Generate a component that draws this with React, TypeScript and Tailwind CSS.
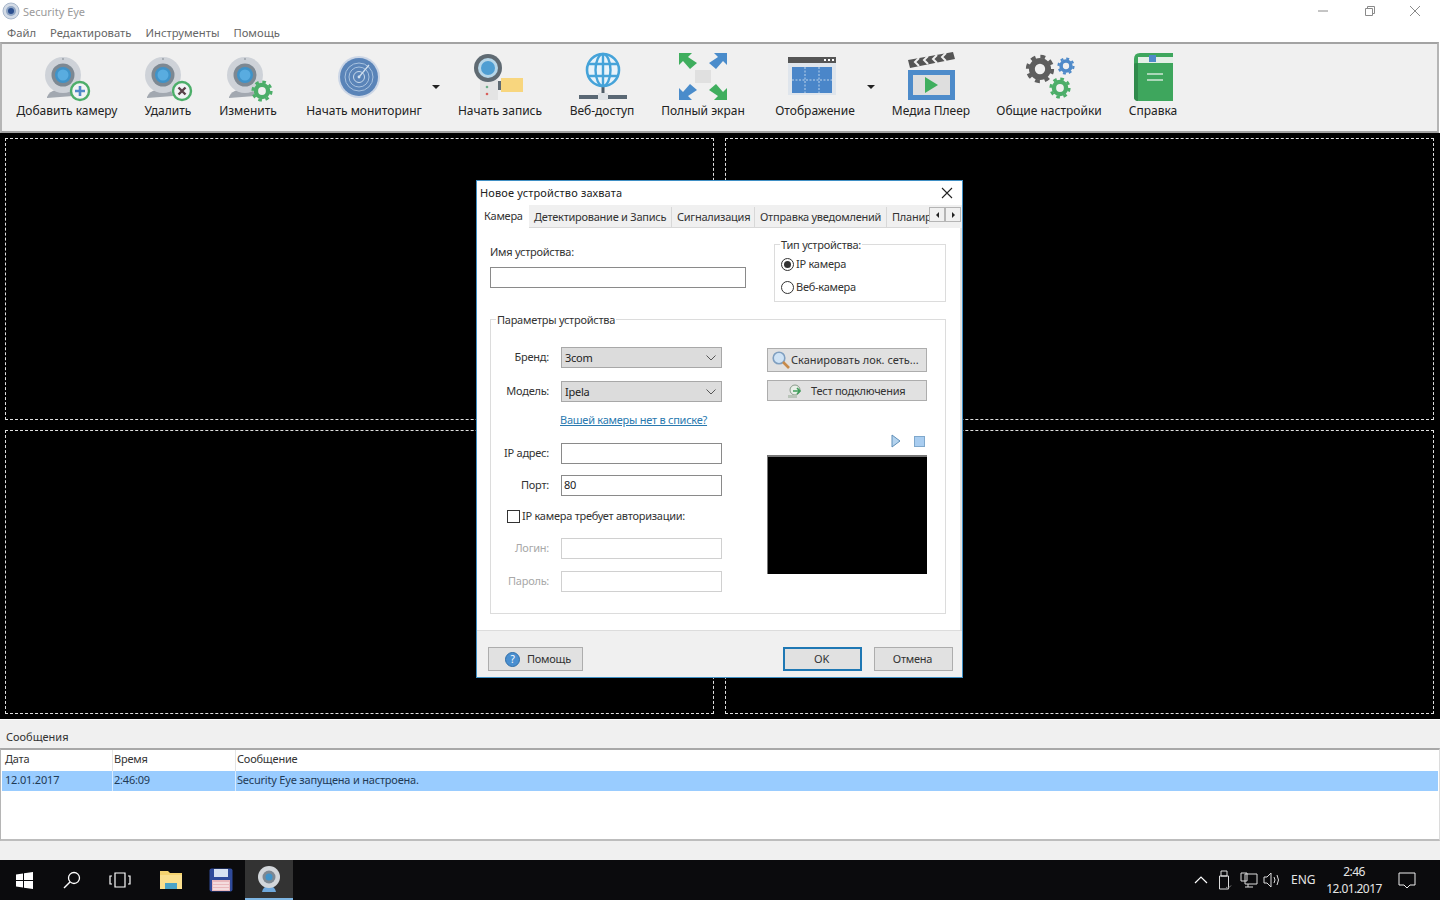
import React from "react";

function Gear({ x, y, r, color, teeth = 8 }: { x: number; y: number; r: number; color: string; teeth?: number }) {
  const tr = r * 0.88;
  const seg = (2 * Math.PI * tr) / (teeth * 2);
  return (
    <g>
      <circle cx={x} cy={y} r={tr} fill="none" stroke={color} strokeWidth={r * 0.26} strokeDasharray={`${seg} ${seg}`} />
      <circle cx={x} cy={y} r={r * 0.58} fill="none" stroke={color} strokeWidth={r * 0.42} />
    </g>
  );
}

function Camera({ cx, badge }: { cx: number; badge: React.ReactNode }) {
  return (
    <svg width="56" height="52" viewBox="0 0 56 52">
      <path d={`M${cx - 16} 47 Q${cx - 14} 41 ${cx - 6} 40 L${cx + 8} 40 L${cx + 10} 46 L${cx - 16} 48Z`} fill="#a2a8b0" />
      <circle cx={cx} cy="25" r="18" fill="#ced2d8" />
      <circle cx={cx} cy="9" r="1" fill="#9aa0a8" />
      <circle cx={cx} cy="25" r="11.5" fill="#7d8892" />
      <circle cx={cx} cy="25" r="8" fill="#3f93c9" />
      <circle cx={cx} cy="25" r="5.5" fill="#59ace0" />
      {badge}
    </svg>
  );
}

function PlusBadge() {
  return (
    <g>
      <circle cx="41" cy="41" r="9" fill="#f1f3f4" stroke="#4cae69" strokeWidth="2.4" />
      <path d="M41 36v10M36 41h10" stroke="#4f8ac9" strokeWidth="2.6" />
    </g>
  );
}

function CrossBadge() {
  return (
    <g>
      <circle cx="42" cy="41" r="9" fill="#f1f3f4" stroke="#4cae69" strokeWidth="2.4" />
      <path d="M38.5 37.5l7 7M45.5 37.5l-7 7" stroke="#5a4148" strokeWidth="2.4" />
    </g>
  );
}

function RadarIcon() {
  return (
    <svg width="56" height="52" viewBox="0 0 56 52">
      <circle cx="23" cy="27" r="21" fill="#ccd6e6" />
      <circle cx="23" cy="27" r="19" fill="#5a84b8" />
      <circle cx="23" cy="27" r="14" fill="none" stroke="#a9c3e0" strokeWidth="1" />
      <circle cx="23" cy="27" r="10" fill="none" stroke="#a9c3e0" strokeWidth="1" />
      <circle cx="23" cy="27" r="5.5" fill="none" stroke="#c7d9ec" strokeWidth="1" />
      <path d="M23 27L33 15" stroke="#d3e1f0" strokeWidth="1.2" />
      <circle cx="23" cy="27" r="1.4" fill="#d3e1f0" />
    </svg>
  );
}

function RecordIcon() {
  return (
    <svg width="56" height="52" viewBox="0 0 56 52">
      <rect x="8" y="30" width="18" height="20" fill="#e4e4e4" />
      <circle cx="15" cy="37" r="1.3" fill="#6db08a" />
      <circle cx="15" cy="44" r="1.3" fill="#d9605c" />
      <rect x="26" y="31" width="3" height="9" fill="#5f6a72" />
      <rect x="29" y="28" width="22" height="14" fill="#f8d67e" />
      <circle cx="16" cy="18" r="14" fill="#5f6a72" />
      <circle cx="16" cy="18" r="10" fill="#b6d6e8" />
      <circle cx="16" cy="18" r="7" fill="#4f9ed2" />
    </svg>
  );
}

function GlobeIcon() {
  return (
    <svg width="56" height="52" viewBox="0 0 56 52">
      <rect x="27.5" y="36" width="3" height="11" fill="#4f5d68" />
      <rect x="5" y="45" width="21" height="4" fill="#5a6874" />
      <rect x="33" y="45" width="20" height="4" fill="#5a6874" />
      <rect x="24" y="43" width="10" height="7" fill="#dfe3e6" />
      <circle cx="29" cy="20" r="16" fill="#e8f3fa" stroke="#45a3d9" strokeWidth="2.6" />
      <ellipse cx="29" cy="20" rx="7.5" ry="16" fill="none" stroke="#45a3d9" strokeWidth="2.4" />
      <path d="M29 4v32M14.5 14h29M14.5 26h29" stroke="#45a3d9" strokeWidth="2.4" />
    </svg>
  );
}

function FullscreenIcon() {
  const arrow = "4,3 17,3 13,7 22,13 15,19 8,11 4,15";
  return (
    <svg width="56" height="52" viewBox="0 0 56 52">
      <rect x="20" y="20" width="16" height="13" fill="#e0e0e0" />
      <polygon points={arrow} fill="#3fae5e" />
      <polygon points={arrow} fill="#4a8ccb" transform="translate(56 0) scale(-1 1)" />
      <polygon points={arrow} fill="#4a8ccb" transform="translate(0 53) scale(1 -1)" />
      <polygon points={arrow} fill="#3fae5e" transform="translate(56 53) scale(-1 -1)" />
    </svg>
  );
}

function DisplayIcon() {
  return (
    <svg width="56" height="52" viewBox="0 0 56 52">
      <rect x="1" y="7" width="48" height="38" fill="#dfe5ec" />
      <rect x="1" y="7" width="48" height="6" fill="#555" />
      <path d="M37 10h2M41 10h2M45 10h2" stroke="#fff" strokeWidth="2" />
      <rect x="5" y="17" width="40" height="26" fill="#4a86c9" />
      <path d="M18 17v26M32 17v26M5 30h40" stroke="#dce8f5" strokeWidth="0.8" strokeDasharray="2 1.5" />
    </svg>
  );
}

function MediaIcon() {
  return (
    <svg width="56" height="52" viewBox="0 0 56 52">
      <polygon points="5,10 50,2 52,9 7,18" fill="#555" />
      <path d="M16 8l-4 4 4 4M25 6l-4 4 4 4M34 5l-4 4 4 4M43 3l-4 4 4 4" fill="none" stroke="#f0f0f0" strokeWidth="2" />
      <rect x="5" y="20" width="47" height="30" fill="#4d8bca" />
      <rect x="10" y="25" width="37" height="20" fill="#dedede" />
      <polygon points="22,27 22,43 35,35" fill="#3fae5e" />
    </svg>
  );
}

function SettingsIcon() {
  return (
    <svg width="56" height="52" viewBox="0 0 56 52">
      <Gear x={19} y={19} r={14} color="#5e5e5e" />
      <Gear x={45} y={16} r={8.5} color="#4f8ac9" />
      <Gear x={39} y={38} r={10.5} color="#4cae69" />
    </svg>
  );
}

function BookIcon() {
  return (
    <svg width="56" height="52" viewBox="0 0 56 52">
      <path d="M9 9 Q9 3 15 3 L48 3 L48 51 L14 51 Q9 51 9 47Z" fill="#3ea65d" />
      <rect x="13" y="7" width="35" height="6" fill="#e3efe6" />
      <rect x="24" y="5" width="7" height="7" fill="#4f8ac9" />
      <path d="M9 14 Q9 13 13 13 L13 51 Q9 51 9 47Z" fill="#2f8a4b" />
      <path d="M22 24h16M22 30h16" stroke="#cfe8d6" strokeWidth="1.6" />
    </svg>
  );
}

function DropArrow({ className }: { className: string }) {
  return <div className={`absolute w-0 h-0 border-l-[4px] border-r-[4px] border-t-[4px] border-l-transparent border-r-transparent border-t-[#222] ${className}`} />;
}

function ToolItem({ width, label, children, arrow }: { width: string; label: string; children: React.ReactNode; arrow?: string }) {
  return (
    <div className={`relative flex flex-col items-center shrink-0 ${width}`}>
      <div className="h-[52px]">{children}</div>
      <div className="h-[18px] leading-[18px] text-[12px] text-[#222] whitespace-nowrap">{label}</div>
      {arrow && <DropArrow className={arrow} />}
    </div>
  );
}

function Toolbar() {
  return (
    <div className="h-[91px] bg-[#f0f0f0] border-t-2 border-b-2 border-l-2 border-r-2 border-t-[#a3a3a3] border-b-[#a3a3a3] border-l-[#b5b5b5] border-r-[#b5b5b5] mr-[1px] flex pl-[6px] pt-[6px] shadow-[0_1px_0_#fff]">
      <ToolItem width="w-[118px]" label="Добавить камеру"><Camera cx={24} badge={<PlusBadge />} /></ToolItem>
      <ToolItem width="w-[84px]" label="Удалить"><Camera cx={23} badge={<CrossBadge />} /></ToolItem>
      <ToolItem width="w-[76px]" label="Изменить"><Camera cx={25} badge={<Gear x={42} y={41} r={10.5} color="#4cae69" />} /></ToolItem>
      <ToolItem width="w-[156px]" label="Начать мониторинг" arrow="left-[146px] top-[35px]"><RadarIcon /></ToolItem>
      <ToolItem width="w-[116px]" label="Начать запись"><RecordIcon /></ToolItem>
      <ToolItem width="w-[88px]" label="Веб-доступ"><GlobeIcon /></ToolItem>
      <ToolItem width="w-[114px]" label="Полный экран"><FullscreenIcon /></ToolItem>
      <ToolItem width="w-[110px]" label="Отображение" arrow="left-[107px] top-[35px]"><DisplayIcon /></ToolItem>
      <ToolItem width="w-[122px]" label="Медиа Плеер"><MediaIcon /></ToolItem>
      <ToolItem width="w-[114px]" label="Общие настройки"><SettingsIcon /></ToolItem>
      <ToolItem width="w-[94px]" label="Справка"><BookIcon /></ToolItem>
    </div>
  );
}

function TitleBar() {
  return (
    <div className="h-[22px] flex items-center bg-white">
      <svg width="18" height="18" viewBox="0 0 18 18" className="ml-[2px]">
        <circle cx="9" cy="9" r="8" fill="#d3dbe6" stroke="#a9b8cc" />
        <circle cx="9" cy="9" r="5" fill="#8fa5c4" />
        <circle cx="9" cy="9" r="3" fill="#2c4f8f" />
      </svg>
      <span className="ml-[3px] mt-[2px] text-[#9a9a9a]">Security Eye</span>
      <div className="ml-auto flex items-center">
        <svg width="46" height="20" viewBox="0 0 46 20"><path d="M18 10h10" stroke="#8a8a8a" /></svg>
        <svg width="46" height="20" viewBox="0 0 46 20"><path d="M19.5 7.5h7v7h-7zM21.5 7.5v-2h7v7h-2" fill="none" stroke="#8a8a8a" /></svg>
        <svg width="46" height="20" viewBox="0 0 46 20" className="mr-[2px]"><path d="M18 5l10 10M28 5L18 15" stroke="#8a8a8a" /></svg>
      </div>
    </div>
  );
}

function Menu() {
  return (
    <div className="h-[20px] flex items-center gap-[14px] pl-[7px] pt-[2px] text-[11.25px] text-[#666]">
      <span>Файл</span>
      <span>Редактировать</span>
      <span>Инструменты</span>
      <span>Помощь</span>
    </div>
  );
}

function VideoGrid() {
  const cell = "border border-dashed border-[#e0e0e0]";
  return (
    <div className="h-[586px] bg-black grid grid-cols-[709px_709px] grid-rows-[282px_284px] gap-x-[11px] gap-y-[10px] pl-[5px] pt-[5px]">
      <div className={cell} />
      <div className={cell} />
      <div className={cell} />
      <div className={cell} />
    </div>
  );
}

function Combo({ value }: { value: string }) {
  return (
    <div className="w-[161px] h-[21px] bg-[#dcdcdc] border border-[#a8a8a8] flex items-center pl-[3px] pr-[5px] text-[#222]">
      <span className="mt-[1px]">{value}</span>
      <svg width="10" height="6" viewBox="0 0 10 6" className="ml-auto"><path d="M0.5 0.5L5 5l4.5-4.5" fill="none" stroke="#555" /></svg>
    </div>
  );
}

function Field({ value, disabled }: { value?: string; disabled?: boolean }) {
  return (
    <div className={`w-[161px] h-[21px] bg-white border flex items-center pl-[2px] text-[#222] ${disabled ? "border-[#d0d0d0]" : "border-[#8a8a8a]"}`}>
      {value}
    </div>
  );
}

function FormRow({ label, children, disabled, mt }: { label: string; children: React.ReactNode; disabled?: boolean; mt: string }) {
  return (
    <div className={`flex items-center ${mt}`}>
      <div className={`w-[58px] text-right whitespace-nowrap ${disabled ? "text-[#a8a8a8]" : "text-[#333]"}`}>{label}</div>
      <div className="ml-[12px]">{children}</div>
    </div>
  );
}

function Radio({ checked, label, mt }: { checked?: boolean; label: string; mt: string }) {
  return (
    <div className={`flex items-center h-[16px] ${mt}`}>
      <div className="w-[13px] h-[13px] rounded-full border border-[#333] bg-white flex items-center justify-center">
        {checked && <div className="w-[7px] h-[7px] rounded-full bg-[#333]" />}
      </div>
      <span className="ml-[2px] text-[#333]">{label}</span>
    </div>
  );
}

const tabClass = "mt-[2px] flex items-center pl-[5px] pt-[1px] whitespace-nowrap border-b border-b-[#d8d8d8]";

function Dialog() {
  return (
    <div className="absolute left-[476px] top-[180px] w-[487px] h-[498px] border border-[#3f8fc4] bg-[#f0f0f0] flex flex-col tracking-[-0.25px]">
      <div className="h-[24px] bg-white flex items-center shrink-0 pl-[3px] text-[#222] tracking-[0.15px]">
        <span>Новое устройство захвата</span>
        <svg width="12" height="12" viewBox="0 0 12 12" className="ml-auto mr-[9px]"><path d="M1 1l10 10M11 1L1 11" stroke="#222" strokeWidth="1.1" /></svg>
      </div>
      <div className="h-[23px] flex shrink-0 text-[#333] relative">
        <div className="w-[52px] bg-white pl-[7px] pt-[3px]">Камера</div>
        <div className={`${tabClass} w-[143px] border-r border-r-[#d8d8d8]`}>Детектирование и Запись</div>
        <div className={`${tabClass} w-[83px] border-r border-r-[#d8d8d8]`}>Сигнализация</div>
        <div className={`${tabClass} w-[132px] border-r border-r-[#d8d8d8]`}>Отправка уведомлений</div>
        <div className={`${tabClass} w-[42px]`}>Планир</div>
        <div className="w-[16px] h-[15px] mt-[2px] bg-[#f0f0f0] border border-[#b5b5b5] flex items-center justify-center"><div className="w-0 h-0 border-y-[3px] border-r-[3px] border-y-transparent border-r-[#222]" /></div>
        <div className="w-[16px] h-[15px] mt-[2px] bg-[#f0f0f0] border border-[#b5b5b5] flex items-center justify-center"><div className="w-0 h-0 border-y-[3px] border-l-[3px] border-y-transparent border-l-[#222]" /></div>
      </div>
      <div className="h-[402px] shrink-0 bg-white border-r-2 border-r-[#e4e4e4] pl-[13px] pr-[12px]">
        <div className="flex h-[91px]">
          <div className="w-[256px] pt-[16px]">
            <div className="h-[16px] leading-[16px] text-[#333]">Имя устройства:</div>
            <div className="mt-[7px] w-[256px] h-[21px] border border-[#8a8a8a]" />
          </div>
          <div className="relative ml-[28px] mt-[16px] w-[172px] h-[58px] border border-[#dcdcdc] pl-[6px] pt-[11px]">
            <div className="absolute left-[5px] top-[-8px] bg-white px-[1px] leading-[16px] text-[#333]">Тип устройства:</div>
            <Radio checked label="IP камера" mt="mt-0" />
            <Radio label="Веб-камера" mt="mt-[7px]" />
          </div>
        </div>
        <div className="relative w-[456px] h-[295px] border border-[#dcdcdc] flex">
          <div className="absolute left-[5px] top-[-8px] bg-white px-[1px] leading-[16px] text-[#333]">Параметры устройства</div>
          <div className="w-[276px] pt-[27px] shrink-0">
            <FormRow label="Бренд:" mt="mt-0"><Combo value="3com" /></FormRow>
            <FormRow label="Модель:" mt="mt-[13px]"><Combo value="Ipela" /></FormRow>
            <div className="ml-[69px] mt-[10px] h-[16px] leading-[16px] text-[#2a7ab0] underline whitespace-nowrap">Вашей камеры нет в списке?</div>
            <FormRow label="IP адрес:" mt="mt-[15px]"><Field /></FormRow>
            <FormRow label="Порт:" mt="mt-[11px]"><Field value="80" /></FormRow>
            <div className="flex items-center ml-[16px] mt-[12px]">
              <div className="w-[13px] h-[13px] border border-[#333] bg-white" />
              <span className="ml-[2px] text-[#333] whitespace-nowrap">IP камера требует авторизации:</span>
            </div>
            <FormRow label="Логин:" mt="mt-[13px]" disabled><Field disabled /></FormRow>
            <FormRow label="Пароль:" mt="mt-[12px]" disabled><Field disabled /></FormRow>
          </div>
          <div className="w-[160px] pt-[28px]">
            <div className="h-[24px] bg-[#e1e1e1] border border-[#adadad] flex items-center pl-[4px] text-[#333] whitespace-nowrap tracking-normal">
              <svg width="18" height="18" viewBox="0 0 18 18">
                <circle cx="7" cy="7" r="5.8" fill="#cfe3f5" stroke="#7f9fc0" strokeWidth="1.6" />
                <path d="M11 11l6 6" stroke="#c78a4a" strokeWidth="2.6" />
              </svg>
              <span className="ml-[1px] mt-[1px]">Сканировать лок. сеть...</span>
            </div>
            <div className="mt-[8px] h-[21px] bg-[#e1e1e1] border border-[#adadad] flex items-center pl-[19px] text-[#333] whitespace-nowrap">
              <svg width="16" height="16" viewBox="0 0 16 16">
                <circle cx="8" cy="7" r="5" fill="#e8efe8" stroke="#8a9a8a" />
                <path d="M1 15h9v-3H1z" fill="#b9c4b9" />
                <path d="M6 8h6M10 5l3 3-3 3" fill="none" stroke="#3f9e5a" strokeWidth="1.6" />
              </svg>
              <span className="ml-[8px] mt-[1px]">Тест подключения</span>
            </div>
            <div className="mt-[33px] h-[14px] flex items-center">
              <svg width="10" height="14" viewBox="0 0 10 14" className="ml-[124px]"><polygon points="1,1 9,7 1,13" fill="#b4d3ee" stroke="#5f8fb8" /></svg>
              <div className="ml-[13px] w-[11px] h-[11px] bg-[#a9cdf0] border border-[#7fa8cc]" />
            </div>
            <div className="mt-[7px] w-[160px] h-[119px] bg-black border-t-2 border-l border-[#777]" />
          </div>
        </div>
      </div>
      <div className="flex-1 border-t border-[#dcdcdc] flex items-start pt-[16px] pl-[11px] pr-[9px] text-[#333]">
        <div className="w-[95px] h-[24px] bg-[#e1e1e1] border border-[#adadad] flex items-center pl-[16px]">
          <div className="w-[15px] h-[15px] rounded-full bg-[#4a8fd0] border border-[#2f6ea8] flex items-center justify-center text-[10px] leading-none text-white">?</div>
          <span className="ml-[7px]">Помощь</span>
        </div>
        <div className="ml-auto w-[79px] h-[24px] bg-[#e1e1e1] border-2 border-[#1f78b4] flex items-center justify-center pr-[2px]">OK</div>
        <div className="ml-[12px] w-[79px] h-[24px] bg-[#e1e1e1] border border-[#adadad] flex items-center justify-center pr-[2px]">Отмена</div>
      </div>
    </div>
  );
}

function Messages() {
  return (
    <>
      <div className="h-[29px] bg-[#f0f0f0] border-t border-white flex items-center pl-[6px] pt-[6px] text-[#333]">Сообщения</div>
      <div className="h-[93px] bg-white border-t-2 border-l border-b-2 border-r border-[#a8a8a8] border-l-[#b5b5b5] border-r-[#dcdcdc] border-b-[#bdbdbd] pl-[1px] pr-[1px] text-[#333] tracking-[-0.2px]">
        <div className="flex h-[21px] items-center pb-0">
          <div className="w-[111px] pl-[3px] pb-[3px] h-full flex items-center border-r border-[#e4e4e4]">Дата</div>
          <div className="w-[123px] pl-[1px] pb-[3px] h-full flex items-center border-r border-[#e4e4e4]">Время</div>
          <div className="pl-[1px] pb-[3px] h-full flex items-center">Сообщение</div>
        </div>
        <div className="flex h-[20px] items-center bg-[#99ccff] text-[#1f3a55]">
          <div className="w-[111px] pl-[3px] pb-[2px] h-full flex items-center border-r border-[#d8ebff]">12.01.2017</div>
          <div className="w-[123px] pl-[1px] pb-[2px] h-full flex items-center border-r border-[#d8ebff]">2:46:09</div>
          <div className="pl-[1px] pb-[2px] h-full flex items-center">Security Eye запущена и настроена.</div>
        </div>
      </div>
      <div className="h-[19px] bg-[#f0f0f0]" />
    </>
  );
}

function Taskbar() {
  return (
    <div className="h-[40px] bg-[#0b0b0d] flex items-center text-[#e6e6e6]">
      <div className="w-[48px] flex justify-center">
        <svg width="17" height="17" viewBox="0 0 17 17"><path d="M0 2.5l7-1v6.5H0zM8 1.3L17 0v8H8zM0 9h7v6.500l-7-1zM8 9h9v8l-9-1.300z" fill="#fff" /></svg>
      </div>
      <div className="w-[48px] flex justify-center">
        <svg width="18" height="18" viewBox="0 0 18 18"><circle cx="11" cy="7" r="5.500" fill="none" stroke="#fff" strokeWidth="1.300" /><path d="M7 11l-6 6" stroke="#fff" strokeWidth="1.500" /></svg>
      </div>
      <div className="w-[48px] flex justify-center">
        <svg width="22" height="16" viewBox="0 0 22 16"><path d="M6 1h10v14H6zM3 4H1v8h2M19 4h2v8h-2" fill="none" stroke="#fff" strokeWidth="1.200" /></svg>
      </div>
      <div className="w-[53px] flex justify-center">
        <svg width="22" height="20" viewBox="0 0 22 20">
          <path d="M0 1h8l2 2h12v15a1 1 0 0 1-1 1H1a1 1 0 0 1-1-1z" fill="#f5d36f" />
          <rect x="0" y="5" width="22" height="14" fill="#fbe08e" />
          <rect x="5" y="13" width="12" height="6" fill="#4aa3c8" />
        </svg>
      </div>
      <div className="w-[48px] flex justify-center">
        <svg width="24" height="24" viewBox="0 0 24 24">
          <rect x="0.500" y="0.500" width="23" height="23" rx="2" fill="#2f4a9a" />
          <rect x="5" y="1" width="14" height="8" fill="#d8e2f2" />
          <rect x="3" y="12" width="18" height="11" fill="#e9b8bd" />
          <path d="M4 15h16M4 18h16M4 21h16" stroke="#fff" />
        </svg>
      </div>
      <div className="w-[48px] h-full bg-[#333] border-b-2 border-[#7db5e3] flex justify-center items-center">
        <svg width="24" height="28" viewBox="0 0 24 28">
          <path d="M5 27q1-6 7-6t7 6z" fill="#6fa8dc" />
          <circle cx="12" cy="12" r="11" fill="#d2d6da" />
          <circle cx="12" cy="12" r="6.500" fill="#7d8892" />
          <circle cx="12" cy="12" r="3.500" fill="#3f93c9" />
        </svg>
      </div>
      <div className="ml-auto flex items-center h-full">
        <svg width="14" height="8" viewBox="0 0 14 8"><path d="M1 7l6-6 6 6" fill="none" stroke="#fff" strokeWidth="1.200" /></svg>
        <svg width="14" height="20" viewBox="0 0 14 20" className="ml-[10px]"><path d="M3 1h6v5H3zM1.500 6h9v13h-9z" fill="none" stroke="#ddd" /><path d="M8 17l2 1.500 3-3" fill="none" stroke="#888" /></svg>
        <svg width="18" height="16" viewBox="0 0 18 16" className="ml-[8px]"><path d="M5 2h12v10H5zM1 1h6v8H1zM8 12v3M5 15h8" fill="none" stroke="#ddd" /></svg>
        <svg width="18" height="16" viewBox="0 0 18 16" className="ml-[5px]"><path d="M1 5h3l4-4v14l-4-4H1zM11 5q2 3 0 6M14 3q3 5 0 10" fill="none" stroke="#ddd" /></svg>
        <span className="ml-[10px] w-[30px] text-[#e6e6e6] text-[12px]">ENG</span>
        <div className="ml-[4px] w-[58px] text-center leading-[17px] whitespace-nowrap text-[12px] tracking-[-0.6px]">
          <div>2:46</div>
          <div>12.01.2017</div>
        </div>
        <svg width="18" height="18" viewBox="0 0 18 18" className="ml-[15px] mr-[24px]"><path d="M1 2h16v12h-5l-3 3-3-3H1z" fill="none" stroke="#eee" /></svg>
      </div>
    </div>
  );
}

export default function App() {
  return (
    <div className="relative w-[1440px] h-[900px] overflow-hidden bg-white font-['Noto_Sans',sans-serif] text-[11px]">
      <TitleBar />
      <Menu />
      <Toolbar />
      <VideoGrid />
      <Messages />
      <Taskbar />
      <Dialog />
    </div>
  );
}
